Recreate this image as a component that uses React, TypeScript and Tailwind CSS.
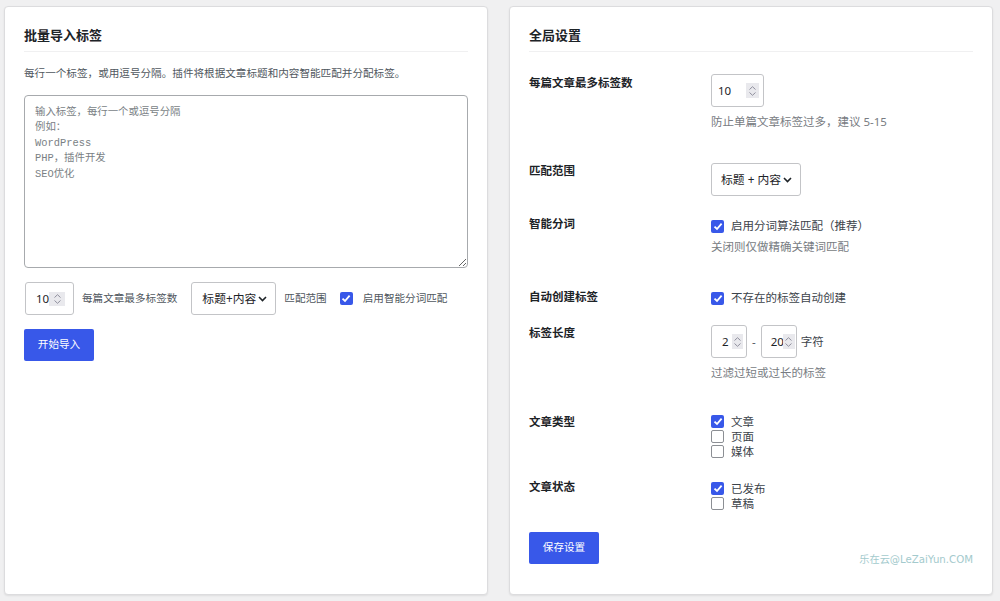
import React from "react";

// small up/down spinner drawn like the native number input one
function Spinner({ className }: { className: string }) {
  return (
    <span className={`flex shrink-0 flex-col items-center justify-center gap-[2px] bg-[#e9e9ed] ${className}`}>
      <svg width="7" height="4" viewBox="0 0 7 4">
        <path d="M0.5 3.5 L3.5 0.7 L6.5 3.5" fill="none" stroke="#8f8f9d" strokeWidth="1" />
      </svg>
      <svg width="7" height="4" viewBox="0 0 7 4">
        <path d="M0.5 0.5 L3.5 3.3 L6.5 0.5" fill="none" stroke="#8f8f9d" strokeWidth="1" />
      </svg>
    </span>
  );
}

function Chevron() {
  return (
    <svg width="9" height="6" viewBox="0 0 9 6" className="shrink-0">
      <path d="M1 1 L4.5 4.5 L8 1" fill="none" stroke="#1d2327" strokeWidth="1.6" />
    </svg>
  );
}

function Check({ checked }: { checked?: boolean }) {
  if (checked) {
    return (
      <span className="flex h-[13px] w-[13px] shrink-0 items-center justify-center rounded-[2px] bg-[#3858e9]">
        <svg width="10" height="9" viewBox="0 0 10 9">
          <path d="M1.5 4.6 L4 7 L8.6 1.6" fill="none" stroke="#fff" strokeWidth="1.8" />
        </svg>
      </span>
    );
  }
  return <span className="h-[13px] w-[13px] shrink-0 rounded-[2px] border border-[#8c8f94] bg-white" />;
}

function Row({ labelPt, contentPt, label, children }: { labelPt: string; contentPt: string; label: string; children: React.ReactNode }) {
  return (
    <div className="flex">
      <div className={`w-[182px] shrink-0 text-[11.5px] font-bold leading-[16px] text-[#1d2327] ${labelPt}`}>{label}</div>
      <div className={`flex-1 ${contentPt}`}>{children}</div>
    </div>
  );
}

const help = "text-[11.5px] leading-[16px] text-[#787c82]";
const opt = "flex items-center gap-[7px] text-[11.5px] text-[#3c434a]";

export default function App() {
  return (
    <div className="min-h-[601px] bg-[#f0f0f1] font-['Noto_Sans','Noto_Sans_CJK_SC',sans-serif]">
      <div className="flex gap-[21px] pl-[4px] pt-[6px]">
        {/* Bulk import */}
        <div className="h-[589px] w-[484px] rounded-[4px] border border-[#dcdcde] bg-white px-[19px] pt-[19px] shadow-[0_1px_2px_rgba(0,0,0,0.08)]">
          <h2 className="border-b border-[#f0f0f1] pb-[7px] text-[13px] font-bold leading-[18px] text-[#1d2327]">批量导入标签</h2>
          <p className="mt-[13px] text-[10.6px] leading-[16px] text-[#50575e]">
            每行一个标签，或用逗号分隔。插件将根据文章标题和内容智能匹配并分配标签。
          </p>
          <textarea
            className="mt-[14px] block h-[173px] w-full rounded-[4px] border border-[#a7aaad] px-[10px] pt-[9px] font-['Liberation_Mono','Noto_Sans_CJK_SC',monospace] text-[10.4px] leading-[15.4px] placeholder:text-[#7a7f85]"
            placeholder={"输入标签，每行一个或逗号分隔\n例如：\nWordPress\nPHP，插件开发\nSEO优化"}
          />
          <div className="mt-[14px] flex h-[33px] items-center text-[10.6px] text-[#50575e]">
            <div className="ml-[1px] flex h-[33px] w-[49px] items-center rounded-[3px] border border-[#c3c4c7] pl-[10px] text-[11.5px] text-[#1d2327]">
              <span className="w-[13px]">10</span>
              <Spinner className="h-[14px] w-[16px]" />
            </div>
            <span className="ml-[8px]">每篇文章最多标签数</span>
            <div className="ml-[14px] flex h-[33px] w-[85px] items-center gap-[2px] rounded-[3px] border border-[#c3c4c7] pl-[10px] text-[11.8px] text-[#1d2327]">
              <span>标题+内容</span>
              <Chevron />
            </div>
            <span className="ml-[8px]">匹配范围</span>
            <span className="ml-[13px]"><Check checked /></span>
            <span className="ml-[10px]">启用智能分词匹配</span>
          </div>
          <button className="mt-[14px] h-[32px] w-[70px] rounded-[2px] bg-[#3858e9] text-[10.6px] text-white">开始导入</button>
        </div>

        {/* Global settings */}
        <div className="h-[589px] w-[484px] rounded-[4px] border border-[#dcdcde] bg-white px-[19px] pt-[19px] shadow-[0_1px_2px_rgba(0,0,0,0.08)]">
          <h2 className="border-b border-[#f0f0f1] pb-[7px] text-[13px] font-bold leading-[18px] text-[#1d2327]">全局设置</h2>

          <Row label="每篇文章最多标签数" labelPt="pt-[23px]" contentPt="pt-[22px] pb-[21px]">
            <div className="flex h-[33px] w-[53px] items-center justify-between rounded-[3px] border border-[#c3c4c7] pl-[6px] pr-[4px] text-[11.5px] text-[#1d2327]">
              <span>10</span>
              <Spinner className="h-[15px] w-[13px]" />
            </div>
            <p className={`mt-[7px] ${help}`}>防止单篇文章标签过多，建议 5-15</p>
          </Row>

          <Row label="匹配范围" labelPt="pt-[12px]" contentPt="pt-[12px]">
            <div className="flex h-[33px] w-[90px] items-center gap-[2px] rounded-[3px] border border-[#c3c4c7] pl-[9px] text-[11.8px] text-[#1d2327]">
              <span className="whitespace-nowrap">标题 + 内容</span>
              <Chevron />
            </div>
          </Row>

          <Row label="智能分词" labelPt="pt-[20px]" contentPt="pt-[22px]">
            <label className={`h-[16px] ${opt}`}>
              <Check checked />
              启用分词算法匹配（推荐）
            </label>
            <p className={`mt-[5px] ${help}`}>关闭则仅做精确关键词匹配</p>
          </Row>

          <Row label="自动创建标签" labelPt="pt-[34px]" contentPt="pt-[35px]">
            <label className={`h-[16px] ${opt}`}>
              <Check checked />
              不存在的标签自动创建
            </label>
          </Row>

          <Row label="标签长度" labelPt="pt-[19px]" contentPt="pt-[19px]">
            <div className="flex items-center text-[11.5px] text-[#1d2327]">
              <div className="flex h-[33px] w-[36px] items-center justify-between rounded-[3px] border border-[#c3c4c7] pl-[10px] pr-[3px]">
                <span>2</span>
                <Spinner className="h-[15px] w-[11px]" />
              </div>
              <span className="mx-[5px] text-[#50575e]">-</span>
              <div className="relative flex h-[33px] w-[36px] items-center rounded-[3px] border border-[#c3c4c7] pl-[9px]">
                <span className="whitespace-nowrap">20</span>
                {/* spinner sits over the end of the value, as in the native field */}
                <Spinner className="absolute right-[1px] top-[8px] h-[15px] w-[12px]" />
              </div>
              <span className="ml-[4px] text-[#3c434a]">字符</span>
            </div>
            <p className={`mt-[7px] ${help}`}>过滤过短或过长的标签</p>
          </Row>

          <Row label="文章类型" labelPt="pt-[33px]" contentPt="pt-[33px]">
            {[
              ["文章", true],
              ["页面", false],
              ["媒体", false],
            ].map(([t, c]) => (
              <label key={t as string} className={`h-[15px] ${opt}`}>
                <Check checked={c as boolean} />
                {t as string}
              </label>
            ))}
          </Row>

          <Row label="文章状态" labelPt="pt-[20px]" contentPt="pt-[22px]">
            {[
              ["已发布", true],
              ["草稿", false],
            ].map(([t, c]) => (
              <label key={t as string} className={`h-[15px] ${opt}`}>
                <Check checked={c as boolean} />
                {t as string}
              </label>
            ))}
          </Row>

          <div className="mt-[21px] flex items-start justify-between">
            <button className="h-[32px] w-[70px] rounded-[2px] bg-[#3858e9] text-[10.6px] text-white">保存设置</button>
            <span className="mt-[20px] font-['DejaVu_Sans','Noto_Sans_CJK_SC',sans-serif] text-[10.2px] leading-[16px] text-[#a3cacd]">
              乐在云@LeZaiYun.COM
            </span>
          </div>
        </div>
      </div>
    </div>
  );
}
